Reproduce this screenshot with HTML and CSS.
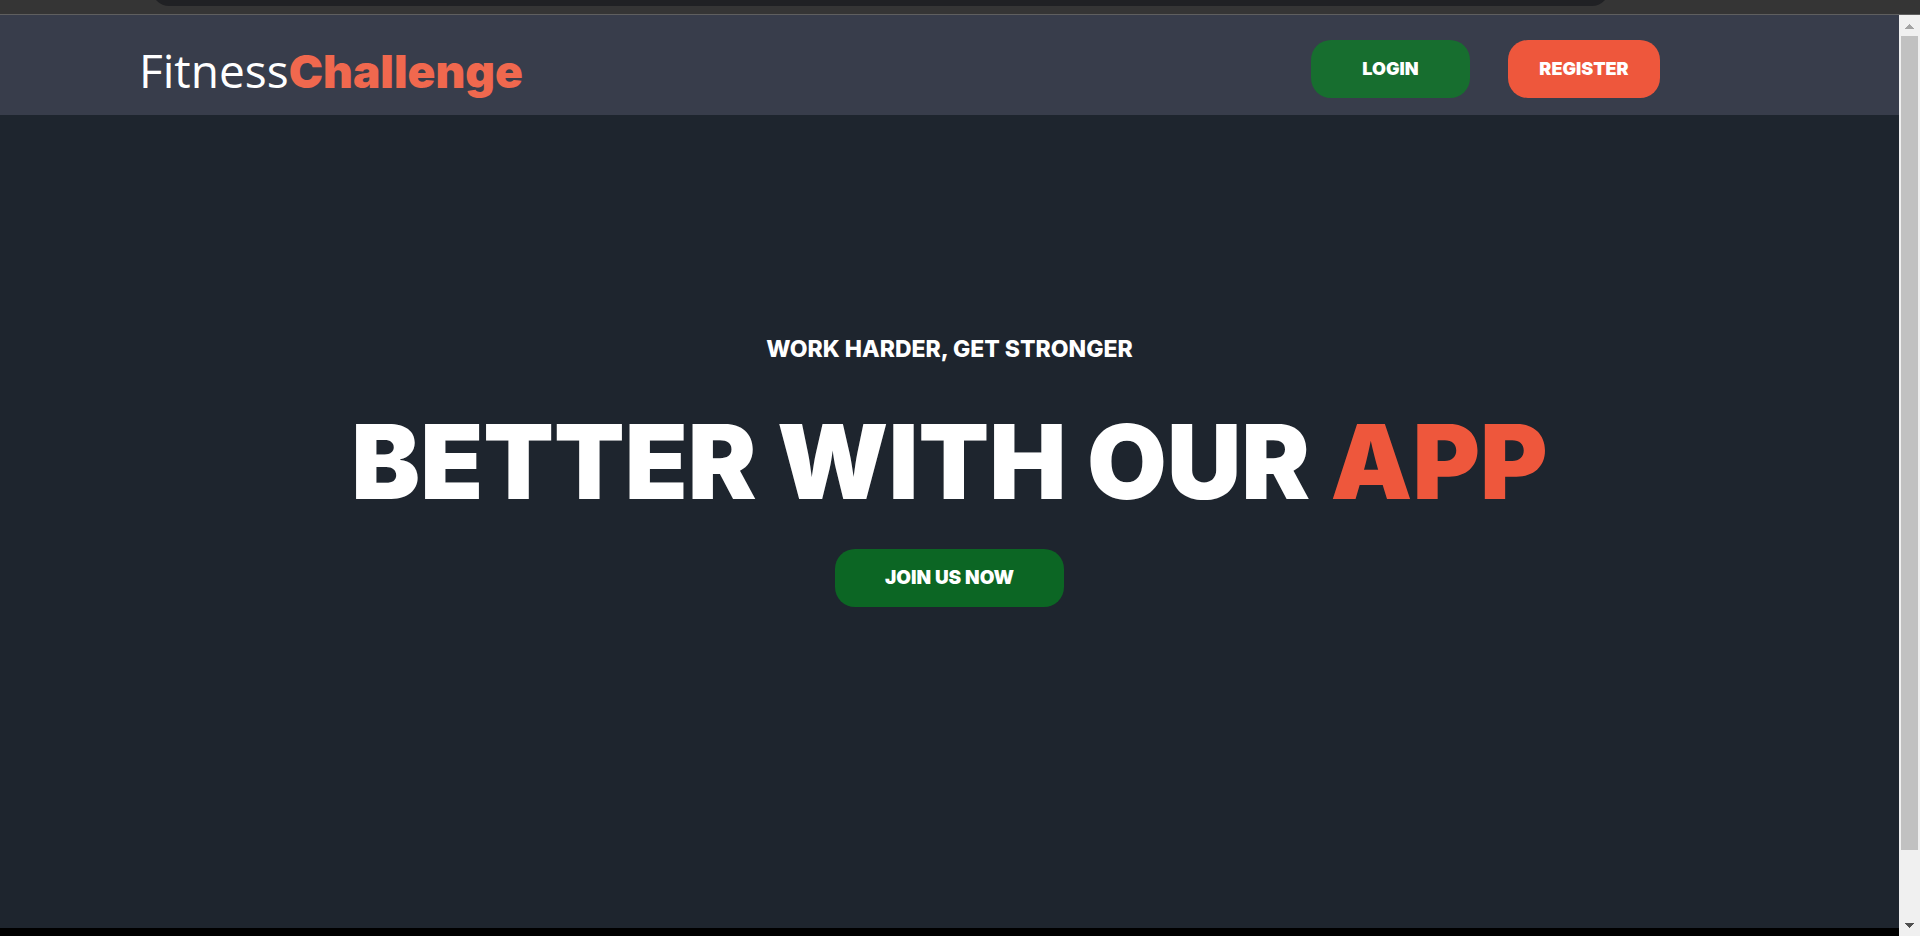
FILE: index.html
```html
<!DOCTYPE html>
<html lang="en">
<head>
<meta charset="utf-8">
<meta name="viewport" content="width=device-width, initial-scale=1">
<title>FitnessChallenge</title>
<link rel="stylesheet" href="styles.css">
</head>
<body>
<div class="toolbar"><div class="address-bar"></div></div>
<div class="viewport">
  <div class="page">
    <header class="header">
      <a class="logo" href="#">Fitness<span class="logo-accent">Challenge</span></a>
      <nav class="actions">
        <button class="button button-login" type="button">LOGIN</button>
        <button class="button button-register" type="button">REGISTER</button>
      </nav>
    </header>
    <main class="hero">
      <p class="tagline">WORK HARDER, GET STRONGER</p>
      <h1 class="headline">BETTER WITH OUR <span class="headline-accent">APP</span></h1>
      <button class="button button-join" type="button">JOIN US NOW</button>
    </main>
  </div>
  <div class="scrollbar">
    <svg class="arrow" viewBox="0 0 9 5" width="9" height="5" aria-hidden="true"><path fill="#a3a3a3" d="M4 0h1v1h1v1h1v1h1v1h1v1H0V4h1V3h1V2h1V1h1z"/></svg>
    <div class="track"><div class="thumb"></div></div>
    <svg class="arrow" viewBox="0 0 9 5" width="9" height="5" aria-hidden="true"><path fill="#505050" d="M0 0h9v1H8v1H7v1H6v1H5v1H4V4H3V3H2V2H1V1H0z"/></svg>
  </div>
</div>
</body>
</html>
```
FILE: styles.css
```css
* {
  box-sizing: border-box;
}

body {
  margin: 0;
  height: 100vh;
  display: flex;
  flex-direction: column;
  overflow: hidden;
  background: #000;
  color: #fff;
  font-family: Inter, "Open Sans", sans-serif;
}

.toolbar {
  flex: none;
  display: flex;
  align-items: flex-end;
  height: 15px;
  padding: 0 311px 8px 152px;
  overflow: hidden;
  background: #353535;
  border-bottom: 1px solid #5f5f5f;
}

.address-bar {
  flex: 1;
  height: 34px;
  background: #202124;
  border-radius: 17px;
}

.viewport {
  flex: 1;
  min-height: 0;
  display: flex;
}

.page {
  flex: 1;
  display: flex;
  flex-direction: column;
  padding-bottom: 8px;
}

.header {
  display: flex;
  justify-content: space-between;
  align-items: flex-start;
  padding: 25px 239px 17px 139px;
  background: #383d4b;
}

.logo {
  padding-top: 5px;
  color: #fff;
  font-family: "Open Sans", sans-serif;
  font-size: 46px;
  line-height: 50px;
  text-decoration: none;
}

.logo-accent {
  color: #f0684e;
  font-family: Inter, sans-serif;
  font-weight: 900;
}

.actions {
  display: flex;
  gap: 38px;
}

.button {
  height: 58px;
  border: 0;
  border-radius: 20px;
  color: #fff;
  font-family: Inter, sans-serif;
  font-size: 18px;
  font-weight: 900;
  line-height: 24px;
}

.button-login {
  width: 159px;
  background: #176e2f;
}

.button-register {
  width: 152px;
  background: #ee573c;
}

.hero {
  flex: 1;
  display: flex;
  flex-direction: column;
  align-items: center;
  padding-top: 218px;
  background: #1e252e;
}

.tagline {
  margin: 0;
  font-size: 23px;
  font-weight: 800;
  line-height: 32px;
}

.headline {
  margin: 37px 0 27px;
  font-size: 103px;
  font-weight: 900;
  line-height: 120px;
  white-space: nowrap;
}

.headline-accent {
  color: #ee573c;
}

.button-join {
  width: 229px;
  background: #0c6624;
  font-size: 19px;
}

.scrollbar {
  flex: none;
  width: 21px;
  display: flex;
  flex-direction: column;
  align-items: center;
  padding: 9px 0 8px;
  background: #f0f0f0;
}

.arrow {
  flex: none;
  display: block;
}

.track {
  flex: 1;
  width: 17px;
  margin: 7px 0 12px;
}

.thumb {
  height: 93%;
  background: #c1c1c1;
}
```
